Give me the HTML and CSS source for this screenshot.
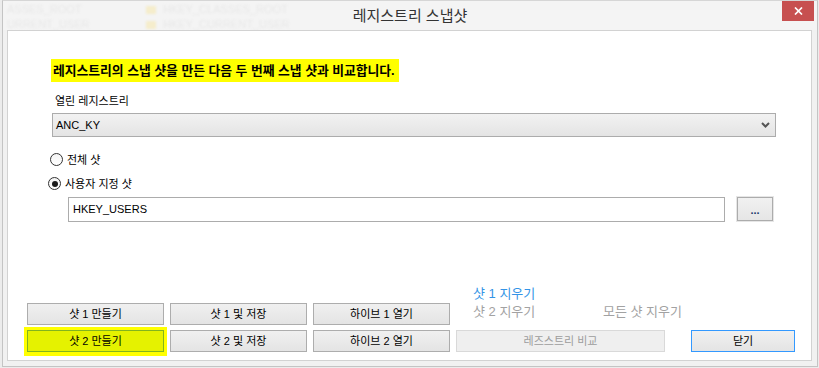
FILE: index.html
```html
<!DOCTYPE html>
<html lang="ko">
<head>
<meta charset="utf-8">
<title>레지스트리 스냅샷</title>
<link rel="stylesheet" href="styles.css">
</head>
<body>
<div class="window">
  <div class="titlebar">
    <div class="ghost">
      <div class="ghost-col ghost-left">
        <div>ASSES_ROOT</div>
        <div>URRENT_USER</div>
      </div>
      <div class="ghost-col ghost-mid">
        <div><span class="gfolder"></span>HKEY_CLASSES_ROOT</div>
        <div><span class="gfolder"></span>HKEY_CURRENT_USER</div>
      </div>
    </div>
    <div class="title">레지스트리 스냅샷</div>
    <div class="tb-right">
      <div class="close">
        <svg width="9" height="8" viewBox="0 0 9 8"><path d="M1 0.5 L8 7.5 M8 0.5 L1 7.5" stroke="#fff" stroke-width="1.7" fill="none"/></svg>
      </div>
    </div>
  </div>
  <div class="panel">
    <div class="intro"><span class="hl">레지스트리의 스냅 샷을 만든 다음 두 번째 스냅 샷과 비교합니다.</span></div>
    <div class="label">열린 레지스트리</div>
    <div class="select">
      <span class="select-value">ANC_KY</span>
      <svg class="chev" width="9" height="6" viewBox="0 0 9 6"><path d="M1 1 L4.5 4.5 L8 1" stroke="#555" stroke-width="2" fill="none"/></svg>
    </div>
    <div class="radio-row r1"><span class="radio"></span><span class="rtext">전체 샷</span></div>
    <div class="radio-row r2"><span class="radio checked"></span><span class="rtext">사용자 지정 샷</span></div>
    <div class="path-row">
      <div class="input">HKEY_USERS</div>
      <div class="browse">...</div>
    </div>
    <div class="actions">
      <div class="link link-on l1">샷 1 지우기</div>
      <div class="btn c1 row2">샷 1 만들기</div>
      <div class="btn c2 row2">샷 1 및 저장</div>
      <div class="btn c3 row2">하이브 1 열기</div>
      <div class="links2">
        <span class="link link-off l2">샷 2 지우기</span>
        <span class="link link-off">모든 샷 지우기</span>
      </div>
      <div class="btn c1 row3 btn-yellow">샷 2 만들기</div>
      <div class="btn c2 row3">샷 2 및 저장</div>
      <div class="btn c3 row3">하이브 2 열기</div>
      <div class="btn c4 row3 btn-disabled">레즈스트리 비교</div>
      <div class="btn c5 row3 btn-close">닫기</div>
    </div>
  </div>
</div>
</body>
</html>
```

FILE: styles.css
```css
html, body {
  margin: 0;
  padding: 0;
}
body {
  background: #ececec;
  font-family: "Liberation Sans", "Noto Sans CJK KR", sans-serif;
  color: #000;
  width: 819px;
  height: 368px;
  overflow: hidden;
}
.window {
  box-sizing: border-box;
  width: 816px;
  height: 367px;
  margin-left: 2px;
  border: 1px solid #c4c4c4;
  border-top-color: #d6d6d6;
  background: #f1f1f1;
  display: flex;
  flex-direction: column;
}
.titlebar {
  height: 29px;
  display: grid;
  grid-template-columns: 1fr auto 1fr;
  background: #f4f4f4;
  overflow: hidden;
}
.ghost {
  display: flex;
  filter: blur(0.8px);
  color: #e8e8e8;
  font-size: 11px;
  line-height: 15px;
  padding-top: 1px;
  overflow: hidden;
}
.ghost-col div {
  white-space: nowrap;
}
.ghost-left {
  margin-left: 4px;
  width: 139px;
}
.ghost-mid div {
  display: flex;
  align-items: center;
}
.gfolder {
  display: inline-block;
  width: 10px;
  height: 8px;
  background: #f5edcc;
  margin-right: 7px;
}
.title {
  font-size: 15px;
  line-height: 29px;
  color: #333;
  white-space: nowrap;
}
.tb-right {
  display: flex;
  justify-content: flex-end;
  align-items: flex-start;
}
.close {
  width: 32px;
  height: 20px;
  margin-right: 3px;
  background: #c75050;
  display: flex;
  align-items: center;
  justify-content: center;
}
.panel {
  box-sizing: border-box;
  height: 331px;
  margin: 0 5px 0 4px;
  border: 1px solid #d2d2d2;
  background: #fff;
}
.intro {
  margin-top: 28px;
  padding-left: 43px;
  height: 23px;
}
.hl {
  display: inline-block;
  height: 23px;
  line-height: 23px;
  padding: 0 4px 0 2px;
  background: #ffff00;
  font-size: 12.8px;
  font-weight: bold;
  white-space: nowrap;
}
.label {
  margin-top: 12px;
  padding-left: 47px;
  font-size: 11px;
  line-height: 14px;
}
.select {
  box-sizing: border-box;
  margin-top: 5px;
  margin-left: 44px;
  width: 724px;
  height: 24px;
  border: 1px solid #acacac;
  background: linear-gradient(#f2f2f2, #e4e4e4);
  display: flex;
  align-items: center;
  justify-content: space-between;
  padding: 0 5px 0 3px;
}
.select-value {
  font-size: 11px;
  line-height: 22px;
}
.chev {
  display: block;
}
.radio-row {
  display: flex;
  align-items: center;
  height: 13px;
}
.r1 {
  margin-top: 16px;
  margin-left: 42px;
}
.r2 {
  margin-top: 11px;
  margin-left: 40px;
}
.radio {
  box-sizing: border-box;
  width: 13px;
  height: 13px;
  border-radius: 50%;
  border: 1px solid #333;
  background: linear-gradient(#f4f4f4, #ffffff);
  display: flex;
  align-items: center;
  justify-content: center;
}
.radio.checked::after {
  content: "";
  width: 6px;
  height: 6px;
  border-radius: 50%;
  background: #1a1a1a;
}
.rtext {
  margin-left: 4px;
  font-size: 11px;
  line-height: 14px;
}
.path-row {
  display: flex;
  align-items: flex-start;
  margin-top: 7px;
  margin-left: 60px;
}
.input {
  box-sizing: border-box;
  width: 657px;
  height: 25px;
  border: 1px solid #acacac;
  background: #fff;
  font-size: 11px;
  line-height: 23px;
  padding-left: 4px;
}
.browse {
  box-sizing: border-box;
  width: 36px;
  height: 24px;
  margin-left: 12px;
  border: 1px solid #acacac;
  box-shadow: 0 0 0 1px #e6e6e6;
  background: linear-gradient(#f1f1f1, #e6e6e6);
  font-size: 11px;
  font-weight: bold;
  line-height: 24px;
  text-align: center;
  color: #1b3a6b;
}
.actions {
  margin-top: 66px;
  margin-left: 19px;
  display: grid;
  grid-template-columns: 137px 137px 137px 209px 124px;
  grid-template-rows: 15px 27px 22px;
  column-gap: 6px;
}
.link {
  font-size: 13px;
  white-space: nowrap;
}
.l1 {
  grid-column: 4;
  grid-row: 1;
  padding-left: 17px;
  line-height: 12px;
  color: #3394e6;
}
.link-off {
  color: #a2a2a2;
}
.links2 {
  grid-column: 4 / 6;
  grid-row: 2;
  display: flex;
  margin-top: 2px;
  line-height: 14px;
  padding-left: 17px;
}
.l2 {
  width: 130px;
}
.c1 { grid-column: 1; }
.c2 { grid-column: 2; }
.c3 { grid-column: 3; }
.c4 { grid-column: 4; }
.c5 { grid-column: 5; }
.row2 { grid-row: 2; align-self: start; }
.row3 { grid-row: 3; }
.btn {
  box-sizing: border-box;
  height: 22px;
  border: 1px solid #adadad;
  background: linear-gradient(#f0f0f0, #e4e4e4);
  font-size: 11px;
  line-height: 20px;
  text-align: center;
  white-space: nowrap;
}
.btn-yellow {
  background: #e5f200;
  border-color: #82b41e;
  box-shadow: 0 0 0 3px #ffff00, 0 1px 0 3px #ffff00;
}
.btn-disabled {
  background: #efefef;
  border-color: #d9d9d9;
  color: #9d9d9d;
}
.btn-close {
  width: 104px;
  justify-self: end;
  border-color: #3399ff;
}
```
